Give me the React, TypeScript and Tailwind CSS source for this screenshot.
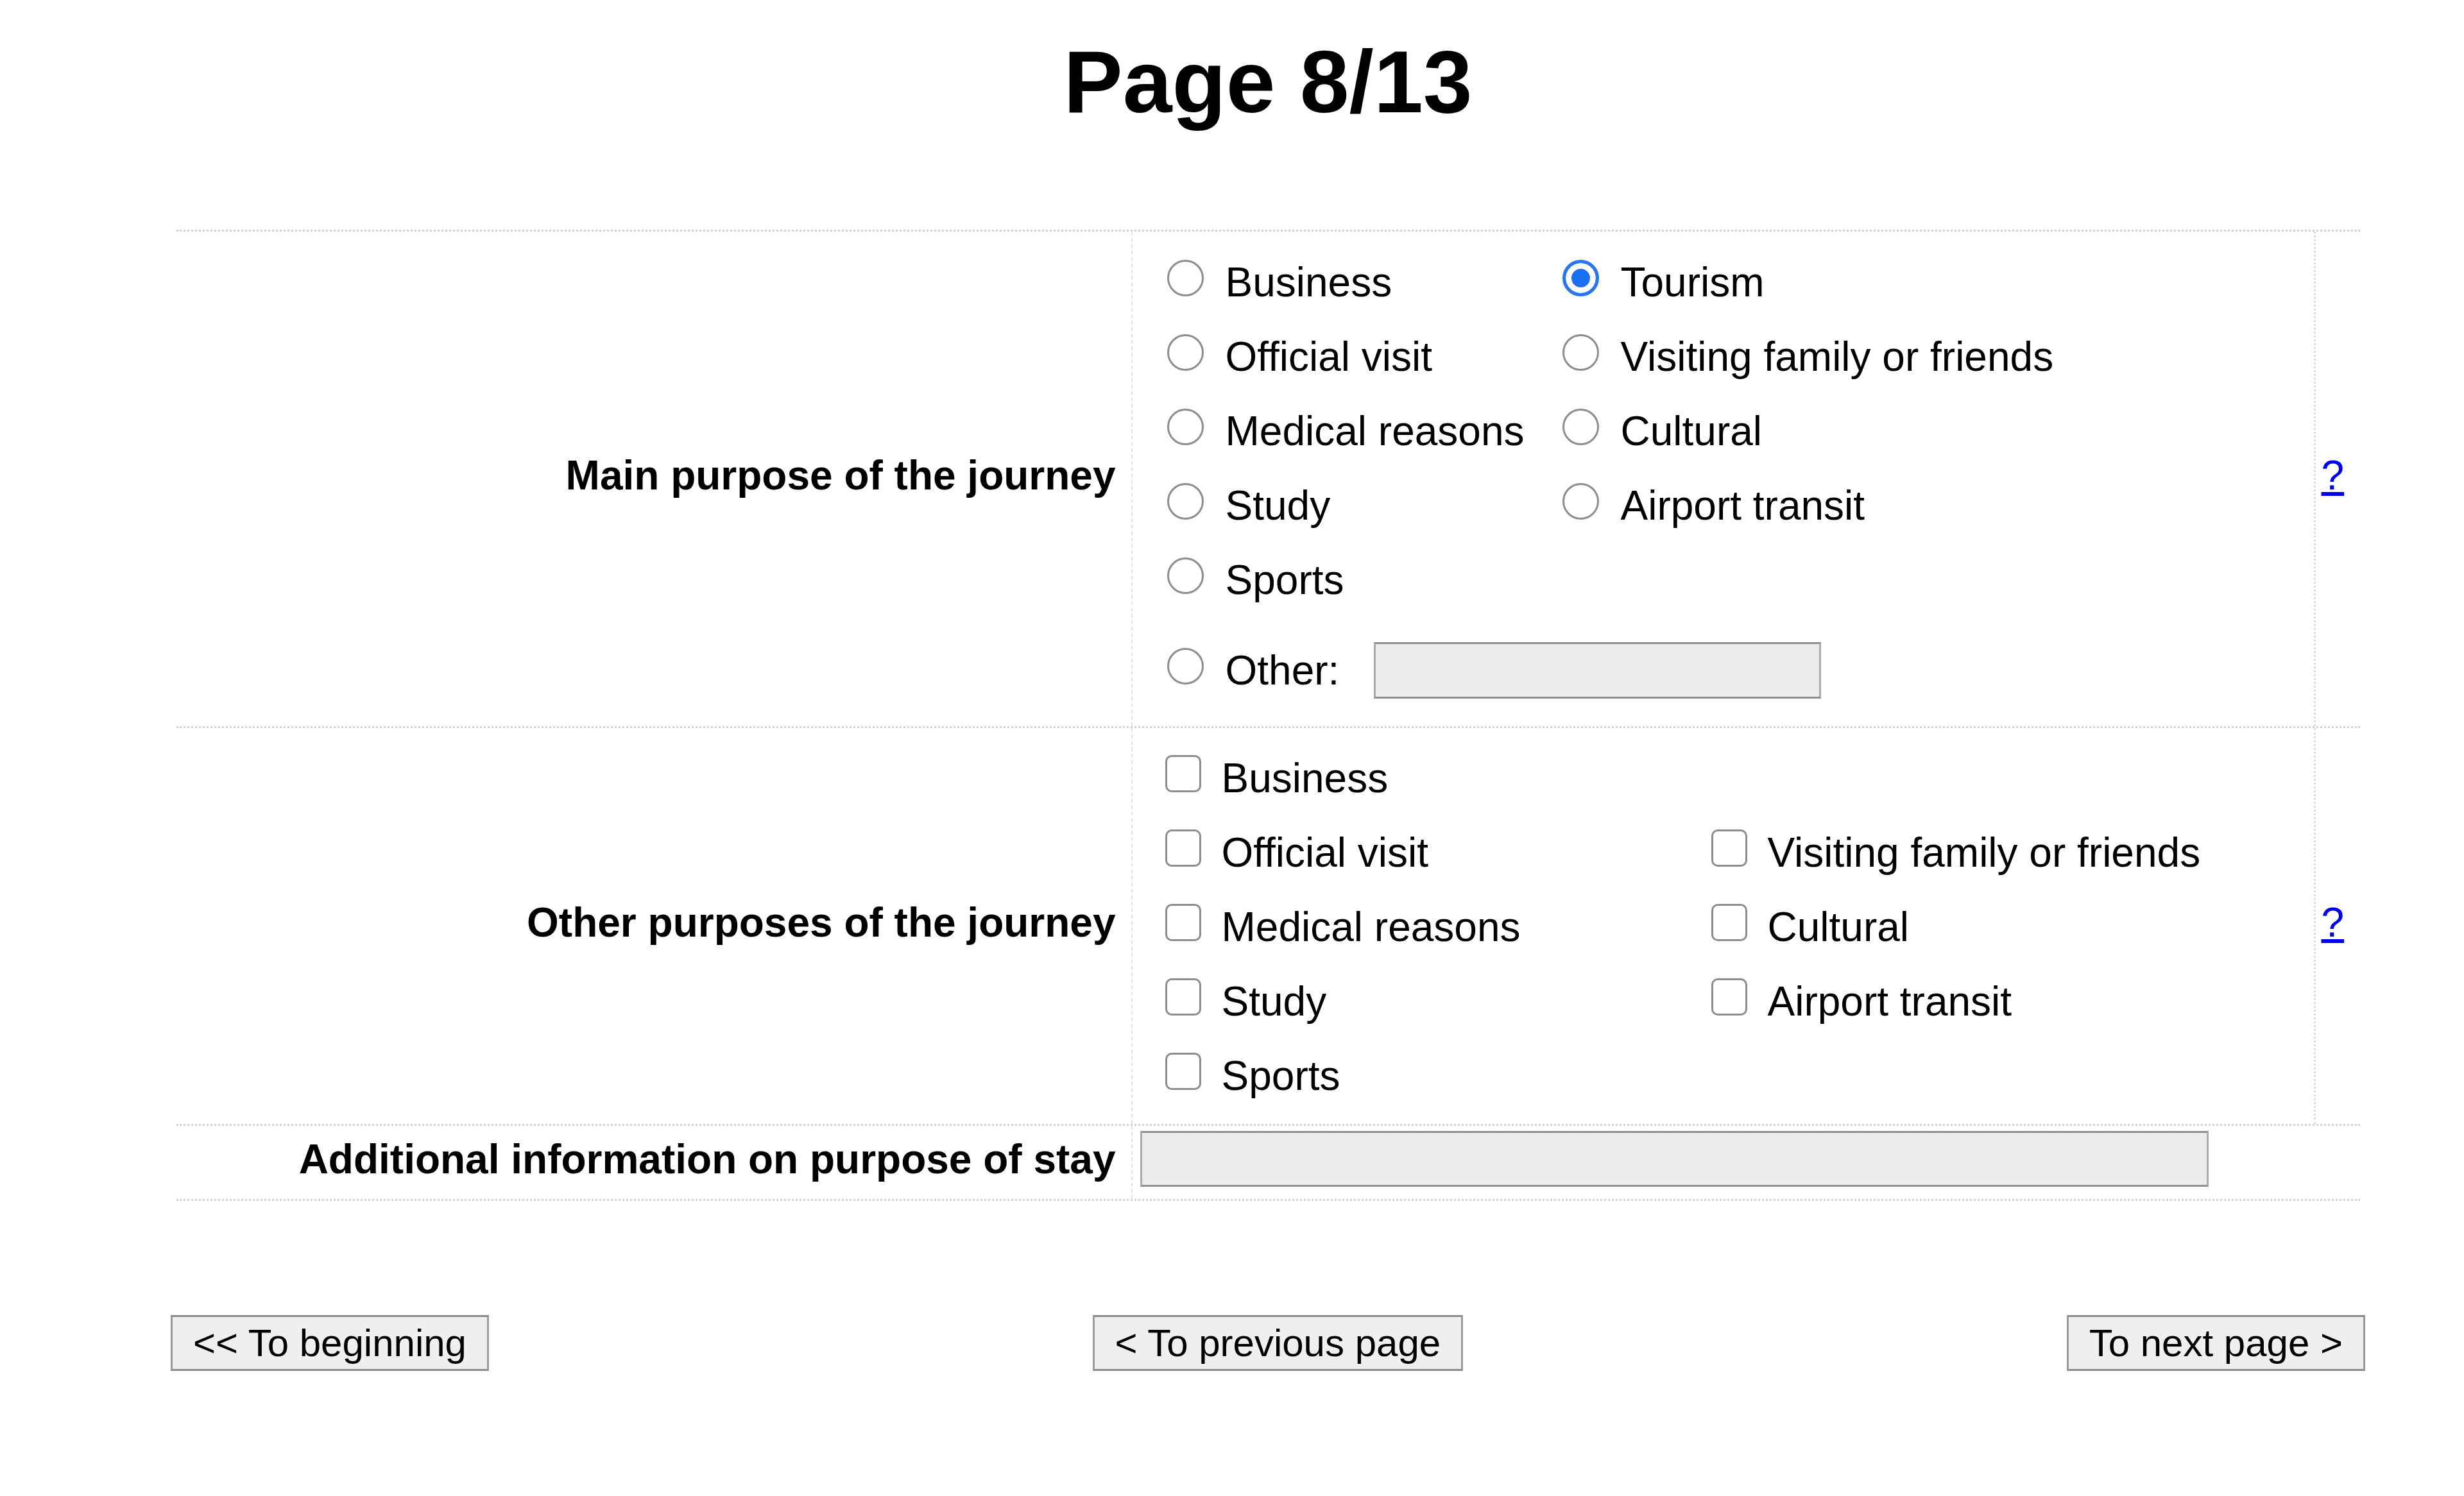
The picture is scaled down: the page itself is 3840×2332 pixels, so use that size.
import React from "react";

const Radio = ({ checked = false }: { checked?: boolean }) =>
  checked ? (
    <span className="w-[57px] h-[57px] shrink-0 rounded-full border-[5px] border-[#2a75f0] bg-[#1c6ef2] shadow-[inset_0_0_0_9px_#ffffff]" />
  ) : (
    <span className="w-[57px] h-[57px] shrink-0 rounded-full border-[3px] border-[#8d8d8d] bg-white" />
  );

const Checkbox = () => (
  <span className="w-[56px] h-[58px] shrink-0 rounded-[10px] border-[3px] border-[#8d8d8d] bg-white" />
);

const Option = ({
  label,
  kind,
  checked,
}: {
  label?: string;
  kind: "radio" | "checkbox";
  checked?: boolean;
}) => {
  if (!label) return <div className="h-[116px]" />;
  return (
    <div className={`h-[116px] flex items-baseline ${kind === "radio" ? "gap-[34px]" : "gap-[32px]"}`}>
      {kind === "radio" ? <Radio checked={checked} /> : <Checkbox />}
      <span className="leading-[116px] whitespace-nowrap">{label}</span>
    </div>
  );
};

const Help = () => (
  <div className="border-l-[3px] border-dotted border-[#dcdcdc] pl-[9px] pb-[12px] flex items-center">
    <a href="#" className="text-[#0000ee] underline leading-[116px]">
      ?
    </a>
  </div>
);

const Label = ({ text }: { text: string }) => (
  <div className="border-r-[2px] border-dashed border-[#e4e4e4] pr-[24px] pb-[12px] flex items-center justify-end font-bold whitespace-nowrap">
    {text}
  </div>
);

const App = () => {
  const mainPurposes = [
    { label: "Business" },
    { label: "Tourism", checked: true },
    { label: "Official visit" },
    { label: "Visiting family or friends" },
    { label: "Medical reasons" },
    { label: "Cultural" },
    { label: "Study" },
    { label: "Airport transit" },
    { label: "Sports" },
    { label: "" },
  ];

  const otherPurposes = [
    "Business",
    "",
    "Official visit",
    "Visiting family or friends",
    "Medical reasons",
    "Cultural",
    "Study",
    "Airport transit",
    "Sports",
    "",
  ];

  const buttonClass =
    "h-[87px] px-[32px] flex items-center border-[3px] border-[#9b9b9b] border-t-[#8a8a8a] border-b-[#8a8a8a] bg-[#efefef] text-[60px] leading-none text-black whitespace-nowrap";

  return (
    <div className="min-h-screen bg-white text-black font-['Liberation_Sans',Arial,sans-serif] text-[64px] pl-[112px]">
      <h1 className="pt-[58px] text-center text-[138px] font-bold leading-none">Page 8/13</h1>

      <div className="w-[3403px] mx-auto mt-[162px] border-b-[3px] border-dotted border-[#d2d2d2]">
        {/* main purpose */}
        <div className="grid grid-cols-[1490px_1841px_72px] border-t-[3px] border-dotted border-[#d2d2d2]">
          <Label text="Main purpose of the journey" />
          <div className="pl-[54px] pt-[21px] pb-[29px]">
            <div className="grid grid-cols-[616px_auto]">
              {mainPurposes.map((p, i) => (
                <Option key={i} kind="radio" label={p.label} checked={p.checked} />
              ))}
            </div>
            <div className="h-[116px] mt-[25px] flex items-center">
              <div className="flex items-baseline gap-[34px]">
                <Radio />
                <span className="leading-[116px]">Other:</span>
              </div>
              <input
                type="text"
                className="block ml-[54px] w-[697px] h-[88px] bg-[#ececec] border-[3px] border-[#ababab] border-t-[#8f8f8f] border-b-[#8f8f8f] outline-none"
              />
            </div>
          </div>
          <Help />
        </div>

        {/* other purposes */}
        <div className="grid grid-cols-[1490px_1841px_72px] border-t-[3px] border-dotted border-[#d2d2d2]">
          <Label text="Other purposes of the journey" />
          <div className="pl-[51px] pt-[20px] pb-[17px]">
            <div className="grid grid-cols-[851px_auto]">
              {otherPurposes.map((label, i) => (
                <Option key={i} kind="checkbox" label={label} />
              ))}
            </div>
          </div>
          <Help />
        </div>

        {/* additional info */}
        <div className="grid grid-cols-[1490px_1913px] border-t-[3px] border-dotted border-[#d2d2d2]">
          <div className="border-r-[2px] border-dashed border-[#e4e4e4] pr-[24px] pb-[10px] flex items-center justify-end font-bold whitespace-nowrap">
            Additional information on purpose of stay
          </div>
          <div className="pl-[12px] pt-[8px] pb-[19px]">
            <input
              type="text"
              className="block w-[1665px] h-[87px] bg-[#ececec] border-[3px] border-[#ababab] border-t-[#8f8f8f] border-b-[#8f8f8f] outline-none"
            />
          </div>
        </div>
      </div>

      <div className="w-[3420px] mx-auto mt-[178px] flex justify-between">
        <button className={buttonClass}>&lt;&lt; To beginning</button>
        <button className={buttonClass}>&lt; To previous page</button>
        <button className={buttonClass}>To next page &gt;</button>
      </div>
    </div>
  );
};

export default App;
